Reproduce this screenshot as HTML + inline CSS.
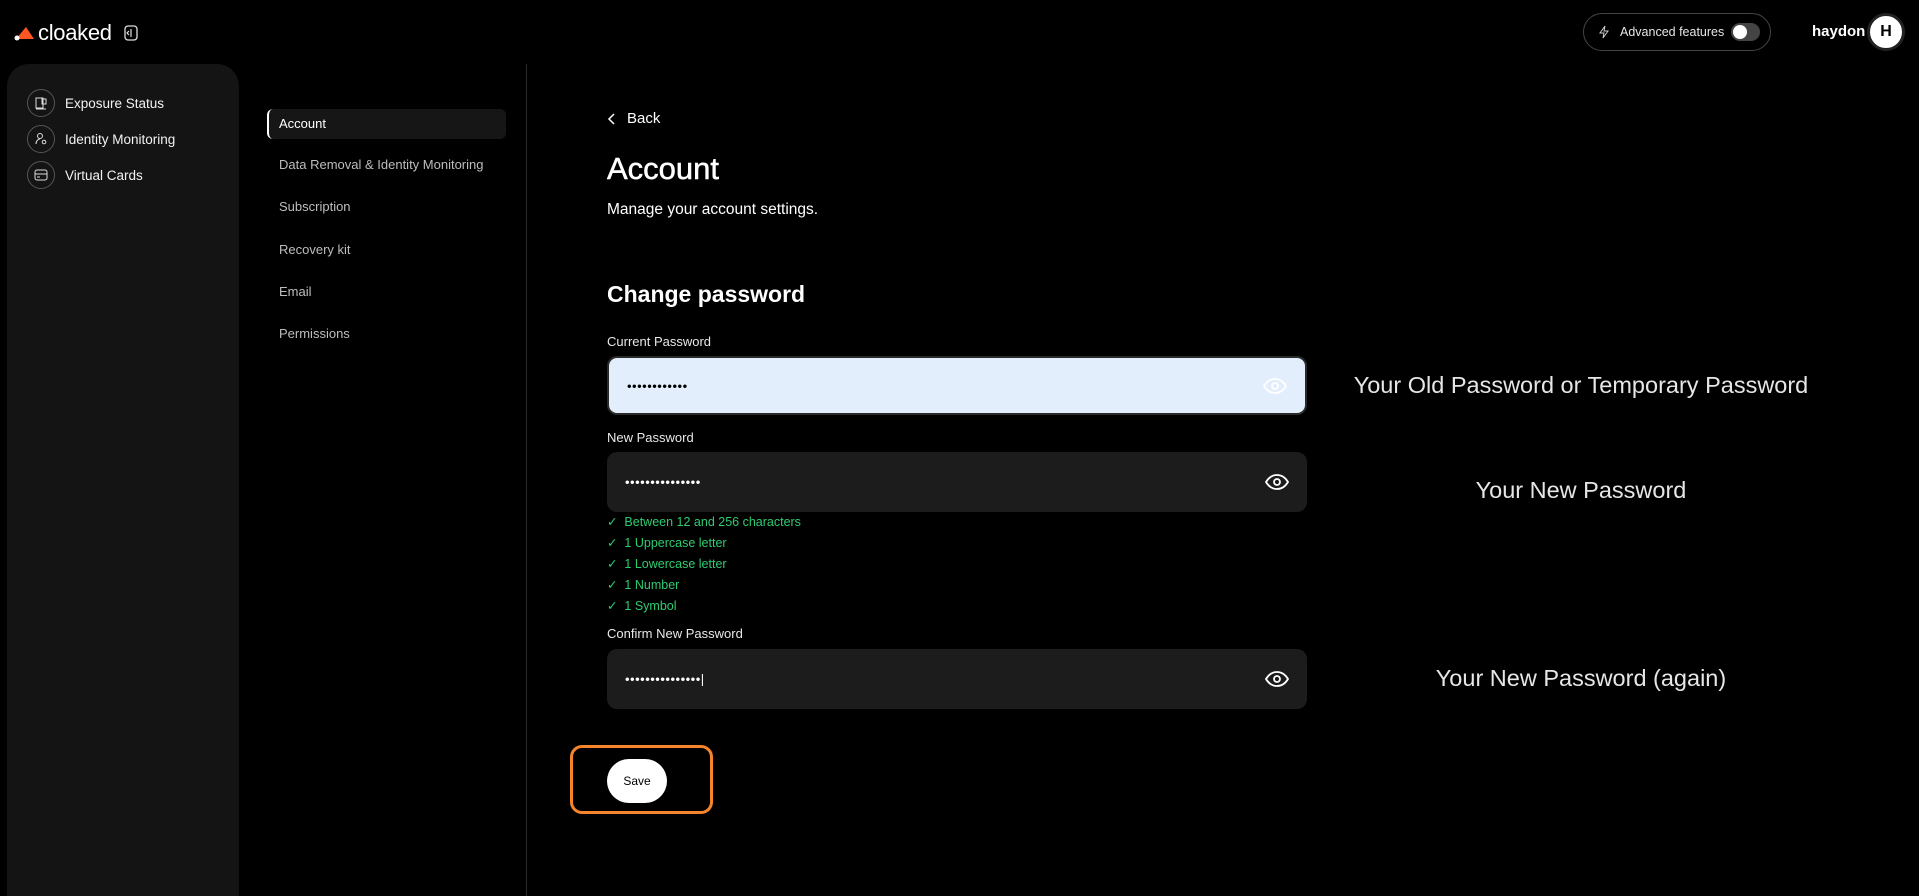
<!DOCTYPE html>
<html><head><meta charset="utf-8"><style>
*{box-sizing:border-box;margin:0;padding:0}
html,body{width:1919px;height:896px;overflow:hidden}
body{background:#000;color:#fff;font-family:"Liberation Sans",sans-serif;position:relative}
.a{position:absolute}
.nav{left:7px;top:64px;width:232px;height:832px;background:#141414;border-radius:22px 22px 0 0}
.ni{position:absolute;left:20px;display:flex;align-items:center;font-size:13.5px;color:#f2f2f2}
.ni .c{width:28px;height:28px;border:1px solid #555;border-radius:50%;margin-right:10px;display:flex;align-items:center;justify-content:center}
.sm{position:absolute;left:279px;font-size:13px;color:#bdbdbd}
.lbl{position:absolute;left:607px;font-size:13px;color:#e8e8e8}
.inp{position:absolute;left:607px;width:700px;height:60px;background:#1c1c1c;border-radius:10px}
.dots{position:absolute;left:18px;top:50%;transform:translateY(-50%);font-size:13px;letter-spacing:0.5px;color:#fff}
.eye{position:absolute;right:18px;top:50%;transform:translateY(-50%)}
.chk{position:absolute;left:607px;font-size:12.5px;color:#2ecc71}
.rt{position:absolute;left:1281px;width:600px;text-align:center;font-family:"Liberation Sans",Arial,sans-serif;font-size:23.5px;color:#e6e6e6}
</style></head><body>
<div class="a" style="left:14px;top:20px;display:flex;align-items:center">
<svg width="22" height="16" viewBox="0 0 22 16"><path d="M2 14 L12 2 L20 14 Z" fill="#ff5722"/><circle cx="3" cy="13" r="2.5" fill="#fff"/></svg>
<span style="font-size:22px;margin-left:2px;letter-spacing:-0.3px">cloaked</span>
<svg style="margin-left:12px" width="14" height="16" viewBox="0 0 14 16"><rect x="1" y="1" width="12" height="14" rx="3" fill="none" stroke="#ddd" stroke-width="1.3"/><path d="M7 4v8M5 6l-2 2 2 2" stroke="#ddd" fill="none" stroke-width="1.2"/></svg>
</div>
<div class="a nav">
<div class="ni" style="top:25px"><div class="c"><svg width="14" height="14" viewBox="0 0 14 14" fill="none" stroke="#ddd"><rect x="2" y="2" width="7" height="10"/><rect x="8" y="3" width="4" height="5"/><path d="M2 13h10"/></svg></div>Exposure Status</div>
<div class="ni" style="top:61px"><div class="c"><svg width="14" height="14" viewBox="0 0 14 14" fill="none" stroke="#ddd"><circle cx="6" cy="4" r="2.5"/><path d="M2 12c0-3 2-5 4-5"/><circle cx="10" cy="10" r="1.8"/></svg></div>Identity Monitoring</div>
<div class="ni" style="top:97px"><div class="c"><svg width="14" height="12" viewBox="0 0 14 12" fill="none" stroke="#ddd"><rect x="1" y="1" width="12" height="10" rx="2"/><path d="M1 5h12M3 8h3"/></svg></div>Virtual Cards</div>
</div>
<div class="a" style="left:267px;top:109px;width:239px;height:30px;background:#161616;border-radius:6px;border-left:2px solid #fff"></div>
<div class="sm" style="top:116px;color:#fff">Account</div>
<div class="sm" style="top:157px">Data Removal &amp; Identity Monitoring</div>
<div class="sm" style="top:199px">Subscription</div>
<div class="sm" style="top:242px">Recovery kit</div>
<div class="sm" style="top:284px">Email</div>
<div class="sm" style="top:326px">Permissions</div>
<div class="a" style="left:526px;top:64px;width:1px;height:832px;background:#2a2a2a"></div>
<div class="a" style="left:1583px;top:13px;width:188px;height:38px;border:1px solid #444;border-radius:19px;display:flex;align-items:center;padding-left:14px;font-size:12.5px;color:#e6e6e6">
<svg width="12" height="14" viewBox="0 0 12 14" fill="none" stroke="#ccc"><path d="M7 1L2 8h4l-1 5 5-7H6z"/></svg><span style="margin-left:10px">Advanced features</span>
<div style="margin-left:7px;width:29px;height:18px;border-radius:9px;background:#444;position:relative"><div style="position:absolute;left:2px;top:2px;width:14px;height:14px;border-radius:50%;background:#fff"></div></div></div>
<div class="a" style="left:1812px;top:23px;font-size:15px;font-weight:bold">haydon</div>
<div class="a" style="left:1867px;top:13px;width:38px;height:38px;border-radius:50%;background:#fff;border:3px solid #222;color:#000;font-weight:bold;font-size:16px;display:flex;align-items:center;justify-content:center">H</div>
<div class="a" style="left:607px;top:110px;font-size:15px;display:flex;align-items:center"><svg width="10" height="14" viewBox="0 0 10 14"><path d="M7 2L2 7l5 5" stroke="#fff" fill="none" stroke-width="1.5"/></svg><span style="margin-left:10px">Back</span></div>
<div class="a" style="left:607px;top:151px;font-size:31px;-webkit-text-stroke:0.5px #fff">Account</div>
<div class="a" style="left:607px;top:201px;font-size:15.5px">Manage your account settings.</div>
<div class="a" style="left:607px;top:281px;font-size:23px;font-weight:bold">Change password</div>
<div class="lbl" style="top:334px">Current Password</div>
<div class="inp" style="top:356px;height:59px;background:#e3eefd;border:2px solid #2a2a2a"><div class="dots" style="color:#000">••••••••••••</div>
<svg class="eye" width="24" height="16" viewBox="0 0 24 16" fill="none" stroke="#fff" stroke-width="1.8"><path d="M1 8C4 3 8 1 12 1s8 2 11 7c-3 5-7 7-11 7S4 13 1 8z"/><circle cx="12" cy="8" r="3"/></svg></div>
<div class="lbl" style="top:430px">New Password</div>
<div class="inp" style="top:452px"><div class="dots">•••••••••••••••</div>
<svg class="eye" width="24" height="16" viewBox="0 0 24 16" fill="none" stroke="#fff" stroke-width="1.8"><path d="M1 8C4 3 8 1 12 1s8 2 11 7c-3 5-7 7-11 7S4 13 1 8z"/><circle cx="12" cy="8" r="3"/></svg></div>
<div class="chk" style="top:514px">✓&nbsp; Between 12 and 256 characters</div>
<div class="chk" style="top:535px">✓&nbsp; 1 Uppercase letter</div>
<div class="chk" style="top:556px">✓&nbsp; 1 Lowercase letter</div>
<div class="chk" style="top:577px">✓&nbsp; 1 Number</div>
<div class="chk" style="top:598px">✓&nbsp; 1 Symbol</div>
<div class="lbl" style="top:626px">Confirm New Password</div>
<div class="inp" style="top:649px"><div class="dots">•••••••••••••••|</div>
<svg class="eye" width="24" height="16" viewBox="0 0 24 16" fill="none" stroke="#fff" stroke-width="1.8"><path d="M1 8C4 3 8 1 12 1s8 2 11 7c-3 5-7 7-11 7S4 13 1 8z"/><circle cx="12" cy="8" r="3"/></svg></div>
<div class="a" style="left:570px;top:745px;width:143px;height:69px;border:3px solid #f5842a;border-radius:12px"></div>
<div class="a" style="left:607px;top:759px;width:60px;height:44px;border-radius:22px;background:#fff;color:#000;font-size:12px;display:flex;align-items:center;justify-content:center">Save</div>
<div class="rt" style="top:372px">Your Old Password or Temporary Password</div>
<div class="rt" style="top:477px">Your New Password</div>
<div class="rt" style="top:665px">Your New Password (again)</div>
</body></html>
